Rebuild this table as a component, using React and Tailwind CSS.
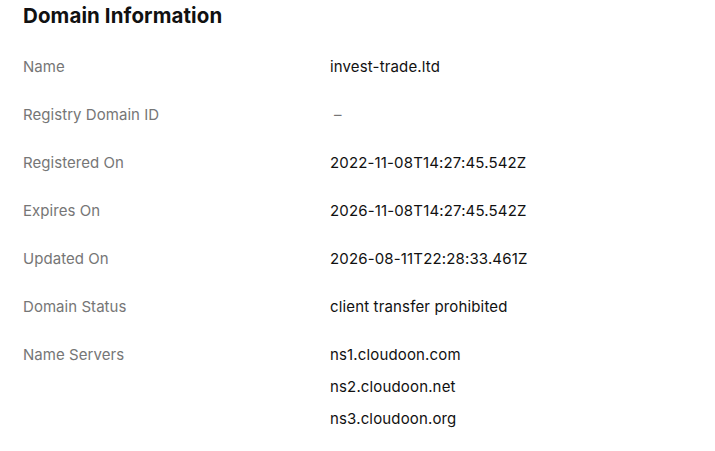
import React from "react";

const rows = [
  { label: "Name", values: ["invest-trade.ltd"] },
  { label: "Registry Domain ID", values: ["–"], muted: true },
  { label: "Registered On", values: ["2022-11-08T14:27:45.542Z"] },
  { label: "Expires On", values: ["2026-11-08T14:27:45.542Z"] },
  { label: "Updated On", values: ["2026-08-11T22:28:33.461Z"] },
  { label: "Domain Status", values: ["client transfer prohibited"] },
  { label: "Name Servers", values: ["ns1.cloudoon.com", "ns2.cloudoon.net", "ns3.cloudoon.org"] },
];

const App = () => {
  return (
    <div className="bg-white w-[715px] h-[451px] overflow-hidden pl-[23px] font-['Inter',sans-serif]">
      <h2 className="text-[20.5px] font-bold text-[#111] leading-[24px] pt-[4px] tracking-[0.1px]">
        Domain Information
      </h2>
      <div className="mt-[28px] flex flex-col gap-[26px]">
        {rows.map((row) => (
          <div key={row.label} className="flex">
            <div className="w-[307px] text-[15px] leading-[22px] text-[#767676] tracking-[0.05px]">{row.label}</div>
            <div className="flex flex-col gap-[10px]">
              {row.values.map((v) => (
                <div
                  key={v}
                  className={
                    row.muted
                      ? "text-[15px] leading-[22px] text-[#767676] pl-[4px]"
                      : "text-[15px] leading-[22px] text-[#111] tracking-[0.15px]"
                  }
                >
                  {v}
                </div>
              ))}
            </div>
          </div>
        ))}
      </div>
    </div>
  );
};

export default App;
